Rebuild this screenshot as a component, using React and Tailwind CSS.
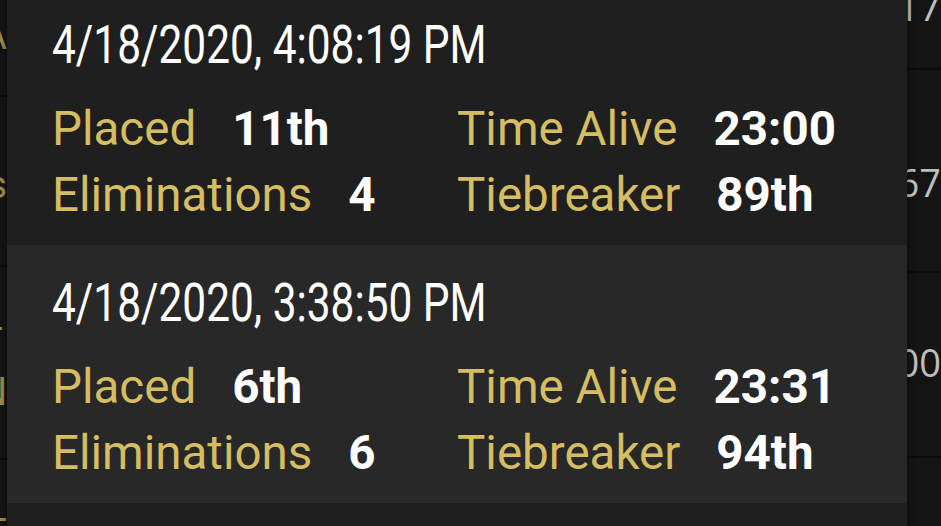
import React from "react";

const matches = [
  { date: "4/18/2020, 4:08:19 PM", placed: "11th", elims: "4", alive: "23:00", tie: "89th", bg: "bg-[#1f1f1f]" },
  { date: "4/18/2020, 3:38:50 PM", placed: "6th", elims: "6", alive: "23:31", tie: "94th", bg: "bg-[#282828]" },
];

function Stat({ label, value }) {
  return (
    <div className="flex items-baseline whitespace-nowrap">
      <span className="text-[#d5bd62]">{label}</span>
      <span className="ml-[36px] font-bold text-white">{value}</span>
    </div>
  );
}

export default function App() {
  return (
    <div className="relative h-[526px] w-[941px] overflow-hidden bg-[#141414] font-['Roboto',sans-serif]">
      {/* table behind the popover */}
      <div className="flex h-full">
        <div className="flex w-[7px] flex-col text-[38px] text-[#9c8a4a]">
          <div className="flex h-[97px] justify-end overflow-hidden border-b-2 border-[#0c0c0c] pt-[8px]"><span className="whitespace-nowrap">TA</span></div>
          <div className="flex h-[170px] justify-end overflow-hidden border-b-2 border-[#0c0c0c] pt-[60px]"><span className="whitespace-nowrap">Kills</span></div>
          <div className="flex h-[193px] justify-end overflow-hidden border-b-2 border-[#0c0c0c] pt-[50px] leading-[50px]"><span className="whitespace-nowrap">T<br />N</span></div>
          <div className="flex flex-1 justify-end overflow-hidden pt-[45px]"><span className="whitespace-nowrap">T</span></div>
        </div>
        <div className="w-[874px]" />
        <div className="flex flex-1 flex-col font-['Open_Sans',sans-serif] text-[38px] leading-none text-[#bdbdbd]">
          <div className="h-[70px] overflow-hidden border-b-2 border-[#0c0c0c]">
            <div className="-mt-[13px] whitespace-nowrap">1.17</div>
          </div>
          <div className="h-[203px] overflow-hidden border-b-2 border-[#0c0c0c] pt-[93px]">
            <div className="whitespace-nowrap">1.67</div>
          </div>
          <div className="h-[185px] overflow-hidden border-b-2 border-[#0c0c0c] pt-[70px]">
            <div className="whitespace-nowrap">2.00</div>
          </div>
          <div className="flex-1" />
        </div>
      </div>

      {/* popover list */}
      <div className="absolute left-[7px] top-[-13px] w-[900px] bg-[#1e1e1e] pb-[40px] shadow-[0_0_6px_rgba(0,0,0,0.6)]">
        {matches.map((m) => (
          <div key={m.date} className={`${m.bg} px-[45px] pb-[17px] pt-[28px]`}>
            <div className="h-[60px] whitespace-nowrap text-[53px] leading-[60px] text-white">
              <span className="inline-block origin-left scale-x-[0.8] font-['Roboto',sans-serif]">{m.date}</span>
            </div>
            <div className="mt-[21px] grid grid-cols-2 text-[47.5px] leading-[66px]">
              <Stat label="Placed" value={m.placed} />
              <Stat label="Time Alive" value={m.alive} />
              <Stat label="Eliminations" value={m.elims} />
              <Stat label="Tiebreaker" value={m.tie} />
            </div>
          </div>
        ))}
      </div>
    </div>
  );
}
